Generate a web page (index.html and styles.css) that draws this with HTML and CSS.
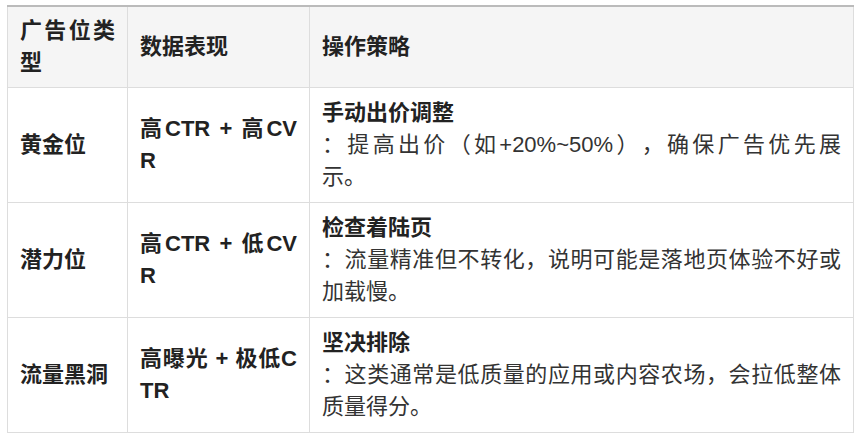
FILE: index.html
```html
<!DOCTYPE html>
<html lang="zh-CN">
<head>
<meta charset="utf-8">
<title>广告位策略</title>
<link rel="stylesheet" href="styles.css">
</head>
<body>
<div class="page">
  <table class="strategy">
    <colgroup>
      <col class="c-type">
      <col class="c-data">
      <col class="c-action">
    </colgroup>
    <thead>
      <tr>
        <th>广告位类型</th>
        <th>数据表现</th>
        <th>操作策略</th>
      </tr>
    </thead>
    <tbody>
      <tr>
        <td class="type">黄金位</td>
        <td class="data">高CTR + 高CVR</td>
        <td class="action">
          <div class="lead">手动出价调整</div>
          <div class="desc"><span class="fill">：提高出价（如+20%~50%），确保广告优先展</span>示。</div>
        </td>
      </tr>
      <tr>
        <td class="type">潜力位</td>
        <td class="data">高CTR + 低CVR</td>
        <td class="action">
          <div class="lead">检查着陆页</div>
          <div class="desc">：流量精准但不转化，说明可能是落地页体验不好或加载慢。</div>
        </td>
      </tr>
      <tr>
        <td class="type">流量黑洞</td>
        <td class="data">高曝光 + 极低CTR</td>
        <td class="action">
          <div class="lead">坚决排除</div>
          <div class="desc">：这类通常是低质量的应用或内容农场，会拉低整体质量得分。</div>
        </td>
      </tr>
    </tbody>
  </table>
</div>
</body>
</html>
```

FILE: styles.css
```css
html, body {
  margin: 0;
  padding: 0;
  background: #ffffff;
}

.page {
  padding: 5px 0 0 7px;
}

.strategy {
  border-collapse: collapse;
  table-layout: fixed;
  width: 846px;
  font-family: "Liberation Sans", "Noto Sans CJK SC", sans-serif;
  font-size: 22px;
  line-height: 32px;
  color: #333333;
  word-break: break-all;
  text-align: justify;
  text-spacing-trim: space-all;
}

.c-type { width: 120px; }
.c-data { width: 182px; }
.c-action { width: 544px; }

.strategy th,
.strategy td {
  border: 1px solid #dddddd;
  text-align: justify;
  vertical-align: middle;
}

.strategy th {
  background: #f5f5f5;
  border-top: 2px solid #bbbbbb;
  font-weight: 700;
  color: #222222;
  padding: 8px 12px;
}

.strategy td {
  padding: 9px 12px;
}

.strategy td.type,
.strategy td.data {
  font-weight: 700;
  color: #222222;
}

.lead {
  font-weight: 700;
  color: #222222;
}

.desc {
  color: #333333;
}

.fill {
  display: block;
  text-align-last: justify;
}
```
